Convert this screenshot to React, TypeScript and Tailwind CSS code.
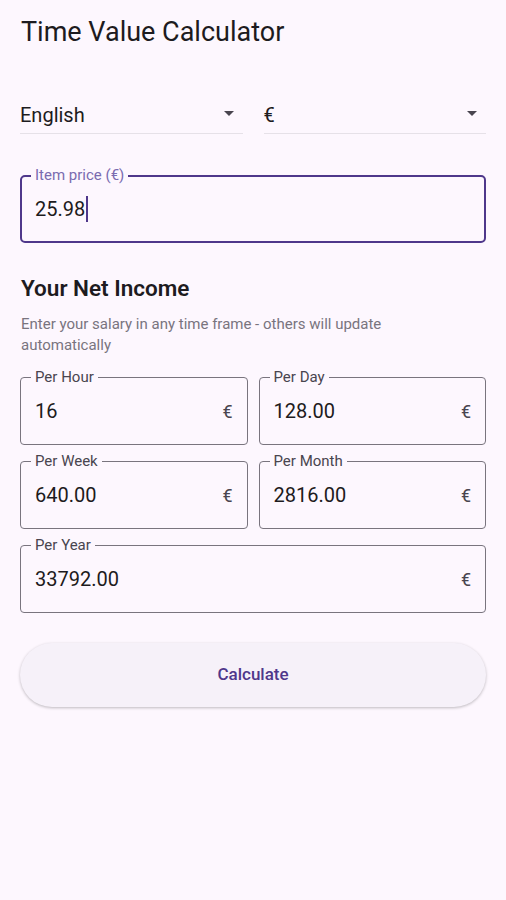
import React from "react";

const font = { fontFamily: "Roboto, 'Noto Sans', sans-serif" };

function Dropdown({ value }: { value: string }) {
  return (
    <div className="flex-1 h-[44px] flex items-center justify-between border-b border-[#e6e1e8] pr-[9px]">
      <span className="text-[20px] text-[#1d1b20] leading-none pt-[7px]">{value}</span>
      <svg width="10" height="6" viewBox="0 0 10 6" className="mt-[4px]">
        <path d="M0 0 L10 0 L5 5 Z" fill="#49454f" />
      </svg>
    </div>
  );
}

function Field({ label, value, className = "" }: { label: string; value: string; className?: string }) {
  return (
    <div className={"relative h-[68px] rounded-[4px] border border-[#79747e] flex items-center px-[14px] " + className}>
      <span className="absolute left-[10px] top-[-10px] px-[4px] bg-[#fdf7fe] text-[15px] leading-[18px] text-[#49454f]">
        {label}
      </span>
      <span className="flex-1 text-[20px] text-[#1d1b20]">{value}</span>
      <span className="text-[18px] text-[#49454f]">€</span>
    </div>
  );
}

export default function App() {
  return (
    <div className="min-h-[900px] w-[506px] bg-[#fdf7fe] px-[20px]" style={font}>
      <h1 className="pt-[17px] text-[27px] leading-[30px] text-[#1d1b20] pl-[1px]">Time Value Calculator</h1>

      <div className="mt-[43px] flex gap-[21px]">
        <Dropdown value="English" />
        <Dropdown value="€" />
      </div>

      <div className="relative mt-[41px] h-[68px] rounded-[5px] border-2 border-[#4f378b] flex items-center px-[13px]">
        <span className="absolute left-[9px] top-[-11px] px-[4px] bg-[#fdf7fe] text-[15px] leading-[18px] text-[#7a6bb0]">
          Item price (€)
        </span>
        <span className="text-[20px] text-[#1d1b20]">25.98</span>
        <span className="ml-[1px] w-[2px] h-[26px] bg-[#4f378b]" />
      </div>

      <h2 className="mt-[33px] text-[22.5px] leading-[24px] font-semibold text-[#1d1b20] pl-[1px]">Your Net Income</h2>
      <p className="mt-[14px] text-[15px] leading-[21px] text-[#79747e] pl-[1px] pr-[60px]">
        Enter your salary in any time frame - others will update automatically
      </p>

      <div className="mt-[21px] grid grid-cols-2 gap-x-[11px] gap-y-[16px]">
        <Field label="Per Hour" value="16" />
        <Field label="Per Day" value="128.00" />
        <Field label="Per Week" value="640.00" />
        <Field label="Per Month" value="2816.00" />
        <Field label="Per Year" value="33792.00" className="col-span-2" />
      </div>

      <button className="mt-[30px] w-full h-[64px] rounded-full bg-[#f6f1f9] shadow-[0_1px_3px_rgba(0,0,0,0.25)] text-[17px] font-medium text-[#4f378b]">
        Calculate
      </button>
    </div>
  );
}
